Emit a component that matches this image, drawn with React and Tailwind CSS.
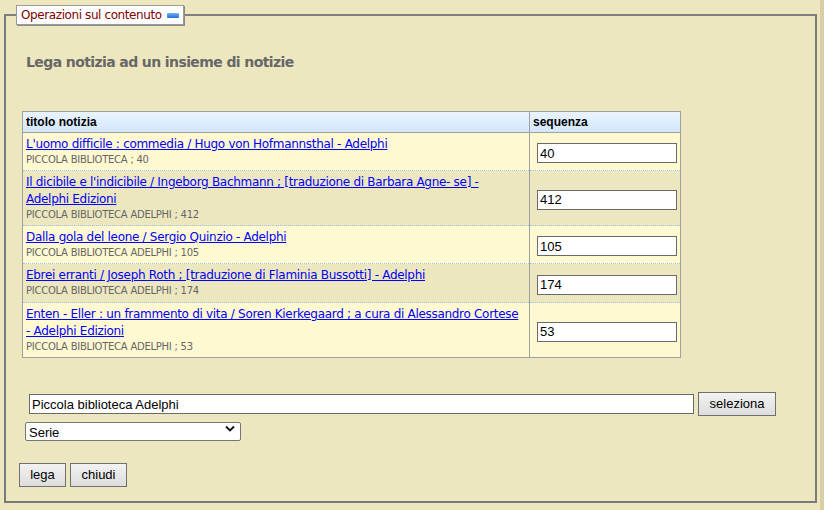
import React from "react";

const rows = [
  {
    title: "L'uomo difficile : commedia / Hugo von Hofmannsthal - Adelphi",
    serie: "PICCOLA BIBLIOTECA ; 40",
    seq: "40",
    h: "h-[38px]",
  },
  {
    title: "Il dicibile e l'indicibile / Ingeborg Bachmann ; [traduzione di Barbara Agne- se] - Adelphi Edizioni",
    serie: "PICCOLA BIBLIOTECA ADELPHI ; 412",
    seq: "412",
    h: "h-[55px]",
  },
  {
    title: "Dalla gola del leone / Sergio Quinzio - Adelphi",
    serie: "PICCOLA BIBLIOTECA ADELPHI ; 105",
    seq: "105",
    h: "h-[38px]",
  },
  {
    title: "Ebrei erranti / Joseph Roth ; [traduzione di Flaminia Bussotti] - Adelphi",
    serie: "PICCOLA BIBLIOTECA ADELPHI ; 174",
    seq: "174",
    h: "h-[39px]",
  },
  {
    title: "Enten - Eller : un frammento di vita / Soren Kierkegaard ; a cura di Alessandro Cortese - Adelphi Edizioni",
    serie: "PICCOLA BIBLIOTECA ADELPHI ; 53",
    seq: "53",
    h: "h-[55px]",
  },
];

const verdana = "font-['DejaVu_Sans',Verdana,sans-serif]";
const arial = "font-['Liberation_Sans',Arial,sans-serif]";

function GrayButton({ children, className = "" }) {
  return (
    <button
      className={`h-[24px] border border-[#707070] bg-gradient-to-b from-[#f2f2f2] to-[#dddddd] text-[13px] text-black ${arial} ${className}`}
    >
      {children}
    </button>
  );
}

export default function App() {
  return (
    <div className="w-[824px] h-[510px] bg-[#ede7c0] flex overflow-hidden">
      <div className="w-[820px] h-[505px] pl-[4px] pt-[5px]">
        <fieldset className="w-[813px] h-[498px] border-2 border-[#7a7a7a] border-t-[#808080] pl-[13px] pr-[6px]">
          <legend className="-ml-[3px] px-[4px] h-[20px] bg-white border border-[#9a9a9a] shadow-[1px_1px_0_#8a8a8a] flex items-center gap-[5px]">
            <span className={`text-[12px] text-[#800000] ${verdana} tracking-[-0.4px]`}>
              Operazioni sul contenuto
            </span>
            <span className="w-[12px] h-[5px] rounded-[1px] bg-gradient-to-b from-[#6fb1f5] to-[#1f6fd6]" />
          </legend>

          <h1 className={`mt-[27px] ml-[7px] text-[14px] font-bold text-[#676767] ${verdana} tracking-[-0.6px]`}>
            Lega notizia ad un insieme di notizie
          </h1>

          <table className="mt-[38px] ml-[3px] w-[659px] border border-[#a0a0a0] border-collapse">
            <thead>
              <tr className="bg-gradient-to-b from-[#eaf4ff] to-[#d2e6fc] h-[21px]">
                <th className={`text-left pl-[3px] text-[12px] font-bold text-black ${arial} border-r border-b border-[#a0a0a0] w-[507px]`}>
                  titolo notizia
                </th>
                <th className={`text-left pl-[3px] text-[12px] font-bold text-black ${arial} border-b border-[#a0a0a0]`}>
                  sequenza
                </th>
              </tr>
            </thead>
            <tbody>
              {rows.map((r, i) => (
                <tr
                  key={r.seq}
                  className={`${r.h} ${i % 2 === 0 ? "bg-[#fff9d1]" : "bg-[#ede7c0]"} ${i > 0 ? "border-t border-dotted border-[#9cc4ee]" : ""}`}
                >
                  <td className="pl-[3px] pr-[8px] pt-[3px] pb-[3px] border-r border-[#a0a0a0] align-top">
                    <a
                      href="#"
                      className={`block text-[12px] leading-[17px] text-[#0000ff] underline ${verdana} tracking-[-0.3px]`}
                    >
                      {r.title}
                    </a>
                    <div className={`text-[10px] leading-[14px] text-[#666] ${verdana} tracking-[-0.25px]`}>
                      {r.serie}
                    </div>
                  </td>
                  <td className="pl-[7px] align-middle">
                    <input
                      defaultValue={r.seq}
                      className={`w-[140px] h-[20px] border border-[#6a6a6a] bg-white px-[2px] text-[13px] text-black ${arial}`}
                    />
                  </td>
                </tr>
              ))}
            </tbody>
          </table>

          <div className="mt-[34px] ml-[10px] flex items-center gap-[4px]">
            <input
              defaultValue="Piccola biblioteca Adelphi"
              className={`w-[665px] h-[20px] border border-[#6a6a6a] bg-white px-[2px] text-[13px] text-black ${arial}`}
            />
            <GrayButton className="w-[78px]">seleziona</GrayButton>
          </div>
          <div className="mt-[3px] ml-[6px] relative w-[216px] h-[19px]">
            <select
              className={`appearance-none w-[216px] h-[19px] border border-[#767676] rounded-[2px] bg-white pl-[3px] text-[13px] text-black ${arial}`}
            >
              <option>Serie</option>
            </select>
            <svg
              className="absolute right-[6px] top-[6px] pointer-events-none"
              width="10"
              height="7"
              viewBox="0 0 10 7"
            >
              <path d="M1 1.5 L5 5.5 L9 1.5" fill="none" stroke="#111" strokeWidth="1.8" />
            </svg>
          </div>

          <div className="mt-[25px] flex gap-[4px]">
            <GrayButton className="w-[47px]">lega</GrayButton>
            <GrayButton className="w-[57px]">chiudi</GrayButton>
          </div>
        </fieldset>
      </div>
      <div className="flex-1 bg-[#d6cfa7]" />
    </div>
  );
}
